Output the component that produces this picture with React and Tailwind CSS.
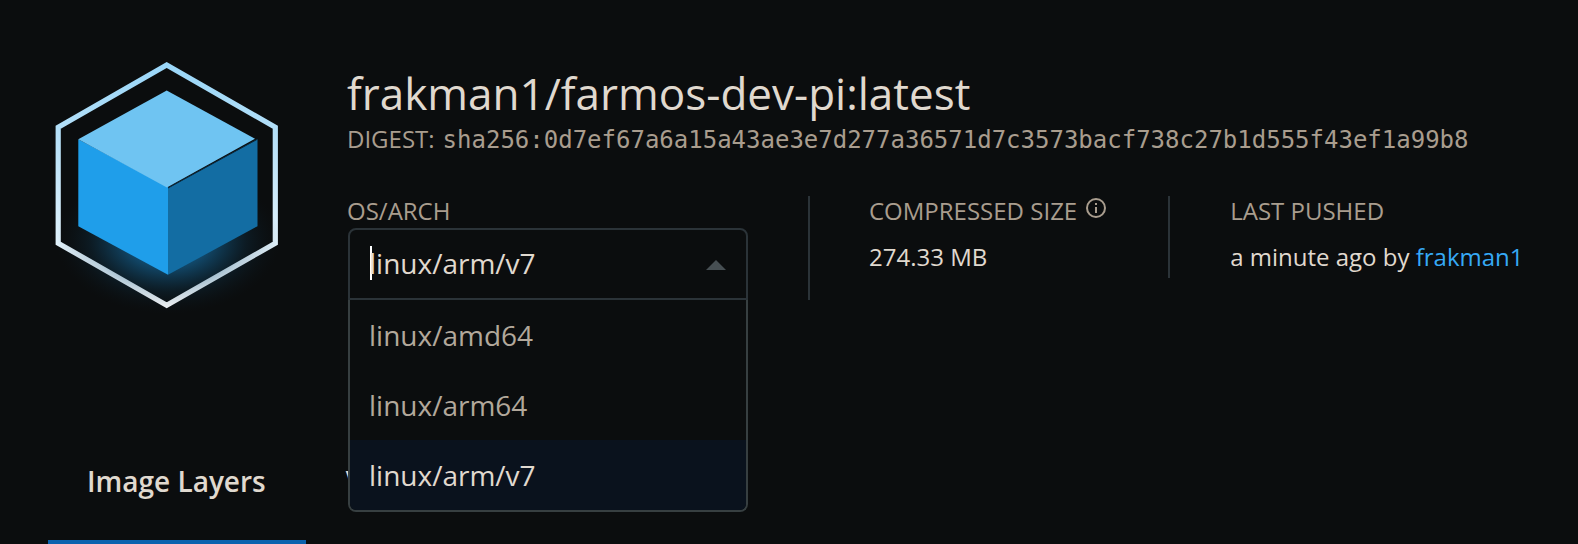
import { useState } from "react";

const PLATFORMS = ["linux/amd64", "linux/arm64", "linux/arm/v7"];

function CubeLogo() {
  return (
    <svg viewBox="48 48 240 272" className="h-[272px] w-[240px]" role="img" aria-label="Image">
      <defs>
        <linearGradient id="frame" x1="0" y1="0" x2="0" y2="1">
          <stop offset="0" stopColor="#9ad7f9" />
          <stop offset="0.3" stopColor="#b6e0f8" />
          <stop offset="1" stopColor="#fbfdff" />
        </linearGradient>
        <radialGradient id="glow">
          <stop offset="0" stopColor="#14679b" stopOpacity="0.95" />
          <stop offset="0.35" stopColor="#14608f" stopOpacity="0.75" />
          <stop offset="0.7" stopColor="#114a6c" stopOpacity="0.22" />
          <stop offset="1" stopColor="#0b1e2a" stopOpacity="0" />
        </radialGradient>
      </defs>
      <path
        d="M166.7 65 275.3 127.2V243.2L166.7 305.3 58.2 243.2V127.2Z"
        fill="none"
        stroke="url(#frame)"
        strokeWidth="5.2"
      />
      <ellipse cx="168" cy="240" rx="112" ry="74" fill="url(#glow)" />
      <path d="M78.3 139.3 168 187V274.8L78.3 226.2Z" fill="#1f9eea" />
      <path d="M168 188 257.5 139.3V226.2L168 274.8Z" fill="#136da3" />
      <path d="M166.7 90.5 255 138.8 166.9 187.4 78.3 139.3Z" fill="#6fc4f2" />
      <path d="M168 188 257.3 139.3" stroke="#0c2a3d" strokeWidth="1" />
    </svg>
  );
}

function PlatformSelect() {
  const [selected, setSelected] = useState("linux/arm/v7");
  return (
    <div className="relative ml-px w-[400px] text-[28px] leading-[38px]">
      <div className="flex h-[72px] items-center rounded-t-lg border-2 border-[#2b3338] px-5 pb-0.5">
        <span className="h-[34px] w-0.5 shrink-0 bg-white" />
        <input
          id="platform"
          role="combobox"
          aria-expanded="true"
          aria-controls="platform-list"
          readOnly
          value={selected}
          className="-ml-[3px] min-w-0 flex-1 bg-transparent text-[#e0d9cf] outline-none"
        />
        <svg viewBox="0 0 20 10" className="mt-1 h-2.5 w-5 fill-[#474f53]" aria-hidden="true">
          <path d="M0 10 10 0 20 10Z" />
        </svg>
      </div>
      <ul
        id="platform-list"
        role="listbox"
        aria-label="OS/ARCH"
        className="absolute inset-x-0 top-full z-10 overflow-hidden rounded-b-lg border-x-2 border-b-2 border-[#373f41] bg-[#0b0d0e]"
      >
        {PLATFORMS.map((name) => (
          <li key={name} role="option" aria-selected={name === selected}>
            <button
              type="button"
              onClick={() => setSelected(name)}
              className={
                name === selected
                  ? "block h-[70px] w-full bg-[#0a121d] px-[19px] text-left text-[#e0d9cf]"
                  : "block h-[70px] w-full px-[19px] text-left text-[#b2a89b]"
              }
            >
              {name}
            </button>
          </li>
        ))}
      </ul>
    </div>
  );
}

function Info() {
  return (
    <svg viewBox="0 0 20 20" className="mt-0.5 h-5 w-5" fill="none" stroke="currentColor" strokeWidth="2" role="img" aria-label="Info">
      <circle cx="10" cy="10" r="9" />
      <path d="M10 9v6M10 5v2" />
    </svg>
  );
}

export default function App() {
  return (
    <div className="min-h-screen bg-[#0b0d0e] px-12 pt-12 font-['Open_Sans',sans-serif] text-[24px] leading-[30px] text-[#e0d9cf]">
      <header className="flex">
        <div className="w-[299px] shrink-0">
          <CubeLogo />
        </div>
        <div className="min-w-0 flex-1 pt-3.5">
          <h1 className="text-[44px] leading-[62px] whitespace-nowrap">frakman1/farmos-dev-pi:latest</h1>
          <p className="flex items-baseline gap-2 whitespace-nowrap text-[#a99d8e]">
            DIGEST:
            <span className="font-['DejaVu_Sans_Mono',monospace]">
              sha256:0d7ef67a6a15a43ae3e7d277a36571d7c3573bacf738c27b1d555f43ef1a99b8
            </span>
          </p>
          <div className="mt-[41px] flex items-start whitespace-nowrap">
            <div className="pr-[60px]">
              <label htmlFor="platform" className="mb-0.5 block text-[#a99d8e]">
                OS/ARCH
              </label>
              <PlatformSelect />
            </div>
            <div className="self-stretch border-l-2 border-[#2b3338] pr-[62px] pl-[59px]">
              <div className="flex gap-[9px] text-[#a99d8e]">
                COMPRESSED SIZE <Info />
              </div>
              <div className="mt-4">274.33 MB</div>
            </div>
            <div className="border-l-2 border-[#2b3338] pb-1.5 pl-[60px]">
              <div className="text-[#a99d8e]">LAST PUSHED</div>
              <div className="mt-4">
                a minute ago by{" "}
                <a href="#frakman1" className="text-[#36a9f5]">
                  frakman1
                </a>
              </div>
            </div>
          </div>
        </div>
      </header>
      <nav className="mt-[118px] flex text-[28px] leading-[38px] font-semibold">
        <a href="#layers" className="border-b-4 border-[#0b62ae] pt-6 pr-10 pb-10 pl-[39px]">
          Image Layers
        </a>
        <a href="#vulnerabilities" className="px-10 pt-6 pb-10">
          Vulnerabilities
        </a>
      </nav>
    </div>
  );
}
